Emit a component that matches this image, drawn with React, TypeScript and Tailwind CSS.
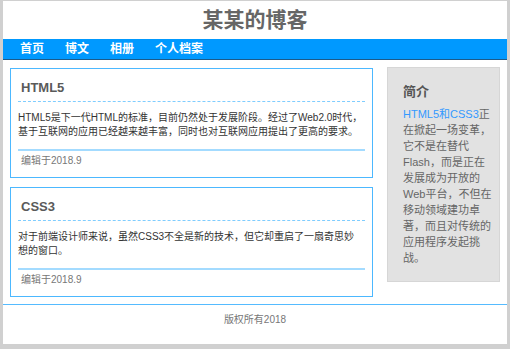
import React from "react";

const posts = [
  {
    title: "HTML5",
    lines: [
      "HTML5是下一代HTML的标准，目前仍然处于发展阶段。经过了Web2.0时代，",
      "基于互联网的应用已经越来越丰富，同时也对互联网应用提出了更高的要求。",
    ],
    date: "编辑于2018.9",
  },
  {
    title: "CSS3",
    lines: [
      "对于前端设计师来说，虽然CSS3不全是新的技术，但它却重启了一扇奇思妙",
      "想的窗口。",
    ],
    date: "编辑于2018.9",
  },
];

const navItems = ["首页", "博文", "相册", "个人档案"];

const introLines = [
  "在掀起一场变革，",
  "它不是在替代",
  "Flash，而是正在",
  "发展成为开放的",
  "Web平台，不但在",
  "移动领域建功卓",
  "著，而且对传统的",
  "应用程序发起挑",
  "战。",
];

function PostCard({ title, lines, date }: { title: string; lines: string[]; date: string }) {
  return (
    <div className="border border-[#4cb8ff] px-[7px] pt-[9px] pb-[9px]">
      <h2 className="border-b border-dashed border-[#7fcdff] pl-[3px] pb-[3px] text-[13px] leading-[20px] font-bold text-[#5a5a5a]">
        {title}
      </h2>
      <p className="mt-[9px] border-b-2 border-[#a3dbff] pb-[10px] text-[10px] leading-[14px] text-[#333]">
        {lines.map((l, i) => (
          <React.Fragment key={i}>
            {l}
            {i < lines.length - 1 && <br />}
          </React.Fragment>
        ))}
      </p>
      <div className="mt-[3px] pl-[3px] text-[10px] leading-[14px] text-[#777]">{date}</div>
    </div>
  );
}

export default function App() {
  return (
    <div
      className="min-h-screen bg-[#d0d0d0] px-[3px] pt-px"
      style={{ fontFamily: '"Liberation Sans", Arial, "Noto Sans CJK SC", sans-serif' }}
    >
      <div className="bg-white">
        <header className="flex h-[38px] items-center justify-center">
          <h1 className="text-[21px] font-bold text-[#666]">某某的博客</h1>
        </header>

        <nav className="flex h-[21px] items-center gap-[21px] border-b border-[#1d5b8a] bg-[#0099ff] pl-[17px]">
          {navItems.map((n) => (
            <span key={n} className="text-[12px] font-bold leading-[20px] text-white">
              {n}
            </span>
          ))}
        </nav>

        <main className="flex items-start gap-[14px] pl-[7px] pt-[7px]">
          <div className="flex w-[363px] flex-col gap-[9px] pt-px">
            {posts.map((p) => (
              <PostCard key={p.title} {...p} />
            ))}
          </div>

          <aside className="w-[113px] border border-[#d6d6d6] bg-[#e2e2e2] pl-[15px] pt-[14px] pb-[15px]">
            <h3 className="text-[13px] font-bold leading-[20px] text-[#555]">简介</h3>
            <p className="mt-[4px] text-[11px] leading-[16px] text-[#666]">
              <span className="text-[#3399ff]">HTML5和CSS3</span>正
              {introLines.map((l, i) => (
                <React.Fragment key={i}>
                  <br />
                  {l}
                </React.Fragment>
              ))}
            </p>
          </aside>
        </main>

        <footer className="mt-[7px] border-t border-[#55bbff] pt-[8px] pb-[17px] text-center text-[10px] leading-[14px] text-[#777]">
          版权所有2018
        </footer>
      </div>
    </div>
  );
}
